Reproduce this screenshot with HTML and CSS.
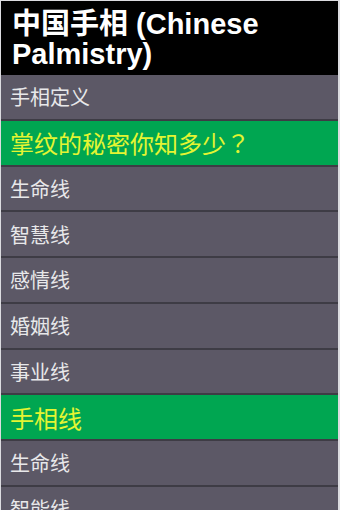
FILE: index.html
```html
<!DOCTYPE html>
<html lang="zh-CN">
<head>
<meta charset="utf-8">
<title>中国手相 (Chinese Palmistry)</title>
<link rel="stylesheet" href="styles.css">
</head>
<body>
<div class="app">
  <header class="title">中国手相 (Chinese Palmistry)</header>
  <ul class="list">
    <li class="row">手相定义</li>
    <li class="row section">掌纹的秘密你知多少<span class="fw">？</span></li>
    <li class="row">生命线</li>
    <li class="row">智慧线</li>
    <li class="row">感情线</li>
    <li class="row">婚姻线</li>
    <li class="row">事业线</li>
    <li class="row section">手相线</li>
    <li class="row">生命线</li>
    <li class="row">智能线</li>
  </ul>
</div>
</body>
</html>
```
FILE: styles.css
```css
html, body {
  margin: 0;
  padding: 0;
  height: 100%;
  overflow: hidden;
  background: #dcdce0;
}
.app {
  margin: 1px 2px 0 1px;
  font-family: "Liberation Sans", Arial, "Noto Sans CJK SC", sans-serif;
}
.title {
  background: #000;
  color: #fff;
  font-weight: bold;
  font-size: 29px;
  line-height: 30px;
  height: 74px;
  box-sizing: border-box;
  padding: 8px 0 0 11px;
}
.list {
  list-style: none;
  margin: 0;
  padding: 0;
}
.row {
  display: flex;
  align-items: center;
  height: 43.75px;
  border-bottom: 2px solid #3e3c45;
  background: #5c5866;
  color: #e8e8ea;
  font-family: "Noto Sans CJK SC", sans-serif;
  font-size: 20px;
  padding-left: 9px;
}
.row.section {
  background: #00a651;
  color: #e4f532;
  font-size: 24px;
}
.fw {
  font-family: "Noto Sans CJK TC", "Noto Sans CJK SC", sans-serif;
}
```
